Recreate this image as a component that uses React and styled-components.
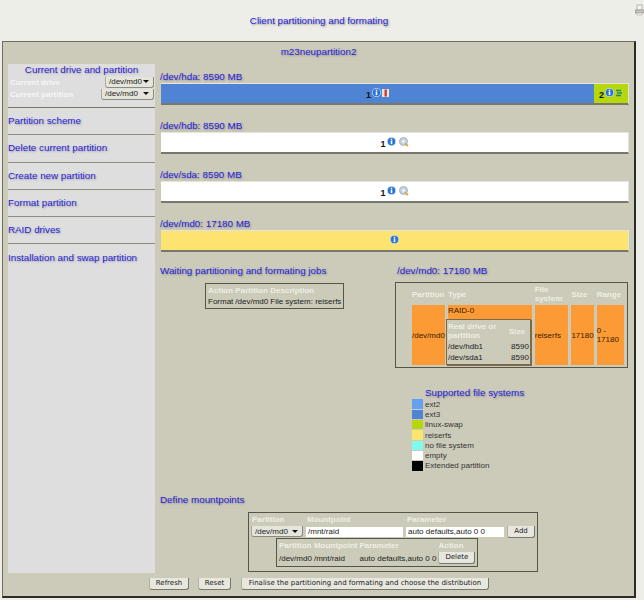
import React from "react";
import styled, { createGlobalStyle } from "styled-components";

const Global = createGlobalStyle`
  html, body { margin: 0; padding: 0; background: #eeeee8; }
  body { font-family: "Liberation Sans", Arial, sans-serif; color: #222; width: 644px; height: 600px; overflow: hidden; }
  * { box-sizing: border-box; }
`;

const blueText = `
  font-size: 9.8px;
  line-height: 12px;
  font-weight: 400;
  color: #2a1ed8;
  text-shadow: 1px 1px 2px #8c8c8c;
`;

const Page = styled.div`
  position: relative;
  width: 644px;
  height: 600px;
  padding: 0 8px 0 2px;
`;
const PrintIcon = styled.svg`
  position: absolute;
  right: 0;
  top: 4px;
`;
const PageTitle = styled.h1`
  margin: 0;
  height: 41px;
  padding-top: 15px;
  text-align: center;
  ${blueText}
`;
const Panel = styled.div`
  width: 634px;
  height: 557px;
  background: #cccbb9;
  border: 1px solid #6f6f60;
  border-right: 2px solid #2c2c26;
  border-bottom: 2px solid #2c2c26;
  padding: 0 5px;
  display: flex;
  flex-direction: column;
`;
const PanelTitle = styled.div`
  height: 22px;
  padding-top: 4px;
  text-align: center;
  ${blueText}
`;
const Body = styled.div`
  display: flex;
  height: 509px;
`;
const Sidebar = styled.nav`
  width: 147px;
  background: #dedede;
  flex-shrink: 0;
`;
const Current = styled.div`
  height: 44px;
  border-bottom: 1px solid #77776b;
  text-align: center;
`;
const CurrentTitle = styled.div`
  ${blueText}
  line-height: 12px;
  text-shadow: 1px 1px 2px #a8a8a8;
`;
const CurrentRow = styled.div`
  display: flex;
  justify-content: space-between;
  align-items: center;
  height: 12px;
  padding: 0 1px 0 2px;
  font-size: 8px;
  font-weight: 700;
  color: #f6f6f6;
`;
const NavItem = styled.div`
  height: 27.3px;
  display: flex;
  align-items: center;
  ${blueText}
  text-shadow: 1px 1px 2px #a0a0a0;
  border-bottom: ${(p) => (p.$last ? "none" : "1px solid #8c8c80")};
`;
const Select = styled.div`
  display: inline-flex;
  align-items: center;
  justify-content: space-between;
  width: ${(p) => p.$w}px;
  height: 11px;
  padding: 0 3px 0 3px;
  background: #e6e5dc;
  border-bottom: 1px solid #8b8b80;
  border-left: 1px solid #a8a89c;
  border-right: 1px solid #8b8b80;
  border-radius: 0 0 3px 3px;
  font-size: 8px;
  font-weight: 400;
  color: #222;
`;
const Arrow = styled.span`
  width: 0;
  height: 0;
  margin-right: 1px;
  border-left: 3px solid transparent;
  border-right: 3px solid transparent;
  border-top: 3px solid #111;
`;
const Main = styled.main`
  flex: 1;
  padding-left: 5px;
  min-width: 0;
`;
const DriveHeading = styled.h2`
  margin: 0;
  ${blueText}
  height: 13px;
  padding-top: 1px;
`;
const DriveSection = styled.section`
  height: 49px;
  padding-top: 6px;
`;
const Bar = styled.div`
  display: flex;
  width: 468px;
  height: 22px;
  margin-left: 1px;
  border-top: 1px solid #e4e4dc;
  border-bottom: 2px solid #77776b;
  border-right: 1px solid #e4e4dc;
`;
const Segment = styled.div`
  flex: ${(p) => (p.$w ? `0 0 ${p.$w}px` : "1")};
  background: ${(p) => p.$bg};
  display: flex;
  align-items: center;
  justify-content: center;
  gap: 1px;
  font-size: 9px;
  font-weight: 700;
  color: #111;
  padding-bottom: 2px;
`;
const Num = styled.span`
  position: relative;
  top: 2px;
`;
const Columns = styled.div`
  display: flex;
  margin-top: 4px;
`;
const LeftCol = styled.div`
  width: 235px;
`;
const RightCol = styled.div`
  flex: 1;
  padding-left: 2px;
`;
const BoxedTable = styled.table`
  border-collapse: separate;
  border-spacing: ${(p) => p.$spacing || "2px"};
  border: 1px solid #55554a;
  padding-left: ${(p) => p.$padLeft || 0}px;
  font-size: 8px;
  line-height: 9px;
  color: #222;
  margin: ${(p) => p.$margin || "0"};
  width: ${(p) => (p.$w ? `${p.$w}px` : "auto")};
  height: ${(p) => (p.$h ? `${p.$h}px` : "auto")};
  background: #cccbb9;
`;
const NestedTable = styled(BoxedTable)`
  margin: 2px 0 0 -2px;
  border: 1px solid #7a6a4a;
  box-shadow: 1px 1px 0 #7a6a4a;
  table-layout: fixed;
`;
const Th = styled.th`
  font-weight: 700;
  color: #eeeee4;
  text-align: ${(p) => p.$align || "left"};
  padding: 0;
  white-space: ${(p) => (p.$wrap ? "normal" : "nowrap")};
  width: ${(p) => (p.$w ? `${p.$w}px` : "auto")};
`;
const Td = styled.td`
  padding: 0;
  white-space: nowrap;
  text-align: ${(p) => p.$align || "left"};
  vertical-align: middle;
`;
const OrangeTd = styled.td`
  background: #fc9a36;
  color: #3a1c00;
  padding: 0;
  vertical-align: ${(p) => p.$valign || "middle"};
`;
const RaidLabel = styled.div`
  height: 12px;
  padding-top: 1px;
`;
const Legend = styled.div`
  margin: 19px 0 0 15px;
`;
const LegendTitle = styled.div`
  ${blueText}
  padding-left: 13px;
`;
const LegendRow = styled.div`
  display: flex;
  align-items: center;
  gap: 2px;
  height: 10.3px;
  font-size: 8px;
  color: #333;
`;
const Swatch = styled.span`
  width: 11px;
  height: 9.4px;
  background: ${(p) => p.$c};
`;
const MountHeading = styled(DriveHeading)`
  margin-top: 22px;
`;
const MountWrap = styled.div`
  width: 290px;
  height: 60px;
  margin: 6px 0 0 88px;
  border: 1px solid #55554a;
  padding: 1px 2px;
`;
const MountHead = styled.div`
  display: grid;
  grid-template-columns: 55px 100px 1fr;
  padding-left: 1px;
  height: 11px;
  font-size: 8px;
  line-height: 11px;
  font-weight: 700;
  color: #eeeee4;
`;
const MountForm = styled.div`
  display: flex;
  align-items: center;
  gap: 3px;
  height: 13px;
`;
const TextInput = styled.div`
  width: ${(p) => p.$w}px;
  height: 10px;
  background: #fff;
  font-size: 8px;
  line-height: 10px;
  padding-left: 2px;
  color: #222;
`;
const Button = styled.button`
  flex: none;
  height: 12px;
  width: ${(p) => p.$w}px;
  margin-left: ${(p) => p.$gap || 0}px;
  padding: 0;
  background: #e8e7de;
  border: none;
  border-left: 1px solid #b0b0a4;
  border-right: 1px solid #77776b;
  border-bottom: 1px solid #77776b;
  border-radius: 0 0 3px 3px;
  font-family: "DejaVu Sans", sans-serif;
  font-size: 7px;
  line-height: 11px;
  color: #222;
  white-space: nowrap;
`;
const Footer = styled.div`
  display: flex;
  padding: 5px 0 0 141px;
`;
const DiskIcon = styled.svg`
  margin-left: 2px;
`;

function Info() {
  return (
    <svg width="9" height="9" viewBox="0 0 9 9">
      <circle cx="4.5" cy="4.5" r="4.1" fill="#2a72d6" stroke="#c4dcf4" strokeWidth="0.8" />
      <rect x="3.7" y="1.7" width="1.6" height="1.2" fill="#fff" />
      <rect x="3.7" y="3.5" width="1.6" height="3.6" fill="#fff" />
    </svg>
  );
}
function RedPart() {
  return (
    <svg width="7" height="8" viewBox="0 0 7 8">
      <rect width="7" height="8" fill="#e8e4e0" />
      <rect x="2.5" y="0.5" width="2.4" height="7" fill="#cf3b30" />
    </svg>
  );
}
function Swap() {
  return (
    <svg width="8" height="8" viewBox="0 0 8 8">
      <rect width="8" height="8" fill="#a9d63c" />
      <path d="M1 1.5h5M2 4h5M1 6.5h5" stroke="#2f8a3a" strokeWidth="1.3" />
    </svg>
  );
}
function Disk() {
  return (
    <DiskIcon width="10" height="10" viewBox="0 0 10 10">
      <circle cx="4.5" cy="4.5" r="4" fill="#c6d4dc" stroke="#8fa8b8" strokeWidth="0.8" />
      <circle cx="4.5" cy="4.5" r="1.2" fill="#fff" />
      <path d="M6 6.5l3 2.5" stroke="#d8a840" strokeWidth="1.8" />
    </DiskIcon>
  );
}

const legend = [
  ["#66a0f0", "ext2"],
  ["#4f84d4", "ext3"],
  ["#b6d80a", "linux-swap"],
  ["#fde36f", "reiserfs"],
  ["#7ffcee", "no file system"],
  ["#ffffff", "empty"],
  ["#000000", "Extended partition"],
];

export default function App() {
  return (
    <Page>
      <Global />
      <PrintIcon width="9" height="12" viewBox="0 0 9 12">
        <rect x="2" y="1" width="5" height="5" fill="#f4f4f0" stroke="#a0a098" strokeWidth="0.7" />
        <rect x="0.5" y="6" width="8" height="3" fill="#c8c8c0" stroke="#8f8f88" strokeWidth="0.7" />
        <rect x="2" y="9" width="5" height="2" fill="#f4f4f0" stroke="#a0a098" strokeWidth="0.5" />
      </PrintIcon>
      <PageTitle>Client partitioning and formating</PageTitle>
      <Panel>
        <PanelTitle>m23neupartition2</PanelTitle>
        <Body>
          <Sidebar>
            <Current>
              <CurrentTitle>Current drive and partition</CurrentTitle>
              <CurrentRow>
                <span>Current drive</span>
                <Select $w={49}>/dev/md0<Arrow /></Select>
              </CurrentRow>
              <CurrentRow>
                <span>Current partition</span>
                <Select $w={53}>/dev/md0<Arrow /></Select>
              </CurrentRow>
            </Current>
            <NavItem>Partition scheme</NavItem>
            <NavItem>Delete current partition</NavItem>
            <NavItem>Create new partition</NavItem>
            <NavItem>Format partition</NavItem>
            <NavItem>RAID drives</NavItem>
            <NavItem $last>Installation and swap partition</NavItem>
          </Sidebar>
          <Main>
            <DriveSection>
              <DriveHeading>/dev/hda: 8590 MB</DriveHeading>
              <Bar>
                <Segment $bg="#4f84d4"><Num>1</Num><Info /><RedPart /></Segment>
                <Segment $w={34} $bg="#b6d80a"><Num>2</Num><Info /><Swap /></Segment>
              </Bar>
            </DriveSection>
            <DriveSection>
              <DriveHeading>/dev/hdb: 8590 MB</DriveHeading>
              <Bar><Segment $bg="#fff"><Num>1</Num><Info /><Disk /></Segment></Bar>
            </DriveSection>
            <DriveSection>
              <DriveHeading>/dev/sda: 8590 MB</DriveHeading>
              <Bar><Segment $bg="#fff"><Num>1</Num><Info /><Disk /></Segment></Bar>
            </DriveSection>
            <DriveSection>
              <DriveHeading>/dev/md0: 17180 MB</DriveHeading>
              <Bar><Segment $bg="#fde36f"><Info /></Segment></Bar>
            </DriveSection>
            <Columns>
              <LeftCol>
                <DriveHeading>Waiting partitioning and formating jobs</DriveHeading>
                <BoxedTable $margin="6px 0 0 45px" $w={139} $h={25}>
                  <thead>
                    <tr><Th>Action</Th><Th>Partition</Th><Th>Description</Th></tr>
                  </thead>
                  <tbody>
                    <tr><Td>Format</Td><Td>/dev/md0</Td><Td>File system: reiserfs</Td></tr>
                  </tbody>
                </BoxedTable>
              </LeftCol>
              <RightCol>
                <DriveHeading>/dev/md0: 17180 MB</DriveHeading>
                <BoxedTable $margin="5px 0 0 -2px" $w={233} $h={86} $spacing="3px 2px" $padLeft={13}>
                  <thead>
                    <tr>
                      <Th $w={32}>Partition</Th>
                      <Th $w={84}>Type</Th>
                      <Th $w={35} $wrap>File system</Th>
                      <Th $w={22}>Size</Th>
                      <Th $w={28}>Range</Th>
                    </tr>
                  </thead>
                  <tbody>
                    <tr>
                      <OrangeTd>/dev/md0</OrangeTd>
                      <OrangeTd $valign="top">
                        <RaidLabel>RAID-0</RaidLabel>
                        <NestedTable $w={85} $h={45} $spacing="1px 2px">
                          <thead>
                            <tr><Th $wrap $w={60}>Real drive or partition</Th><Th>Size</Th></tr>
                          </thead>
                          <tbody>
                            <tr><Td>/dev/hdb1</Td><Td $align="right">8590</Td></tr>
                            <tr><Td>/dev/sda1</Td><Td $align="right">8590</Td></tr>
                          </tbody>
                        </NestedTable>
                      </OrangeTd>
                      <OrangeTd>reiserfs</OrangeTd>
                      <OrangeTd>17180</OrangeTd>
                      <OrangeTd>0 - 17180</OrangeTd>
                    </tr>
                  </tbody>
                </BoxedTable>
                <Legend>
                  <LegendTitle>Supported file systems</LegendTitle>
                  {legend.map(([c, t]) => (
                    <LegendRow key={t}><Swatch $c={c} />{t}</LegendRow>
                  ))}
                </Legend>
              </RightCol>
            </Columns>
            <MountHeading>Define mountpoints</MountHeading>
            <MountWrap>
              <MountHead><span>Partition</span><span>Mountpoint</span><span>Parameter</span></MountHead>
              <MountForm>
                <Select $w={52}>/dev/md0<Arrow /></Select>
                <TextInput $w={97}>/mnt/raid</TextInput>
                <TextInput $w={98}>auto defaults,auto 0 0</TextInput>
                <Button $w={28}>Add</Button>
              </MountForm>
              <BoxedTable $margin="0 0 0 25px" $w={202} $h={28} $spacing="2px 2px">
                <thead>
                  <tr><Th>Partition</Th><Th>Mountpoint</Th><Th>Parameter</Th><Th>Action</Th></tr>
                </thead>
                <tbody>
                  <tr>
                    <Td>/dev/md0</Td><Td>/mnt/raid</Td><Td>auto defaults,auto 0 0</Td>
                    <Td><Button $w={37}>Delete</Button></Td>
                  </tr>
                </tbody>
              </BoxedTable>
            </MountWrap>
          </Main>
        </Body>
        <Footer>
          <Button $w={40}>Refresh</Button>
          <Button $w={33} $gap={9}>Reset</Button>
          <Button $w={248} $gap={10}>Finalise the partitioning and formating and choose the distribution</Button>
        </Footer>
      </Panel>
    </Page>
  );
}
